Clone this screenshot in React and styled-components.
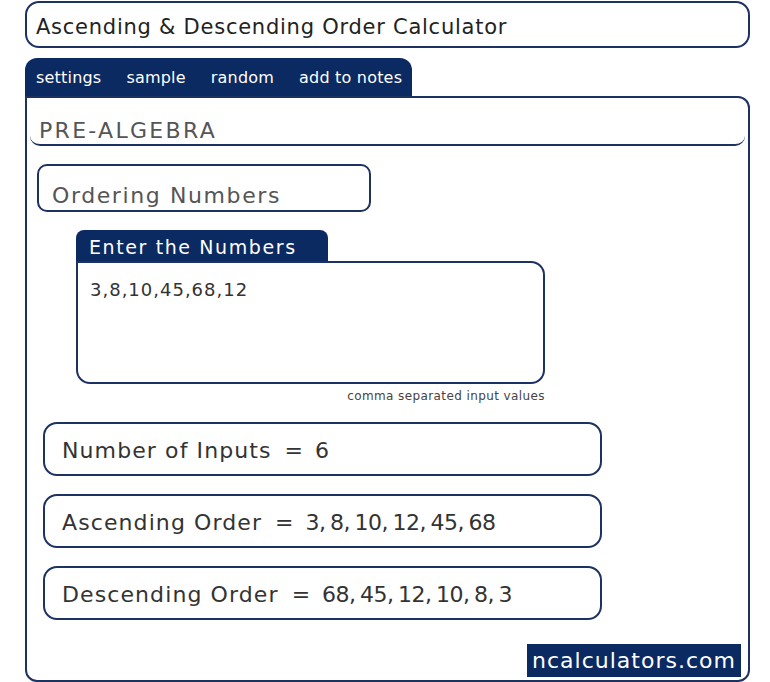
import React from "react";
import styled, { createGlobalStyle } from "styled-components";

const navy = "#0c2a62";
const line = "#1d3263";

const GlobalStyle = createGlobalStyle`
  html, body {
    margin: 0;
    padding: 0;
    background: #fff;
  }
  body {
    font-family: "DejaVu Sans", "Open Sans", sans-serif;
  }
`;

function Result({ label, value }) {
  return (
    <ResultStyled>
      <LabelStyled>{label}</LabelStyled>
      <EqStyled>=</EqStyled>
      <ValueStyled>{value}</ValueStyled>
    </ResultStyled>
  );
}

export default function App() {
  const values = [3, 8, 10, 45, 68, 12];
  const asc = [...values].sort((a, b) => a - b);
  const desc = [...asc].reverse();

  return (
    <>
      <GlobalStyle />
      <PageStyled>
        <TitleStyled>Ascending &amp; Descending Order Calculator</TitleStyled>
        <TabBarStyled>
          <TabStyled>settings</TabStyled>
          <TabStyled>sample</TabStyled>
          <TabStyled>random</TabStyled>
          <TabStyled>add to notes</TabStyled>
        </TabBarStyled>
        <PanelStyled>
          <SectionHeadStyled>PRE-ALGEBRA</SectionHeadStyled>
          <TopicStyled>Ordering Numbers</TopicStyled>
          <InputGroupStyled>
            <InputLabelStyled>Enter the Numbers</InputLabelStyled>
            <TextAreaStyled defaultValue={values.join(",")} />
            <HintStyled>comma separated input values</HintStyled>
          </InputGroupStyled>
          <ResultsStyled>
            <Result label="Number of Inputs" value={values.length} />
            <Result label="Ascending Order" value={asc.join(", ")} />
            <Result label="Descending Order" value={desc.join(", ")} />
          </ResultsStyled>
          <FooterStyled>
            <BrandStyled>ncalculators.com</BrandStyled>
          </FooterStyled>
        </PanelStyled>
      </PageStyled>
    </>
  );
}

const PageStyled = styled.div`
  width: 725px;
  padding: 1px 0 0 25px;
  box-sizing: content-box;
`;

const TitleStyled = styled.div`
  height: 39px;
  border: 2px solid ${line};
  border-radius: 14px;
  padding: 4px 9px 0;
  box-sizing: content-box;
  display: flex;
  align-items: center;
  font-size: 21px;
  color: #222;
  letter-spacing: 0.75px;
  white-space: nowrap;
`;

const TabBarStyled = styled.div`
  margin-top: 10px;
  width: 387px;
  height: 38px;
  background: ${navy};
  border-radius: 12px 12px 0 0;
  display: flex;
  align-items: center;
  padding-left: 11px;
  box-sizing: border-box;
`;

const TabStyled = styled.span`
  color: #fff;
  font-size: 16px;
  margin-right: 25px;
  letter-spacing: 0.2px;
  white-space: nowrap;
`;

const PanelStyled = styled.div`
  border: 2px solid ${line};
  border-radius: 0 12px 12px 12px;
  height: 586px;
  box-sizing: border-box;
  display: flex;
  flex-direction: column;
`;

const SectionHeadStyled = styled.div`
  margin: 0 3px;
  height: 48px;
  box-sizing: border-box;
  border-bottom: 2px solid ${line};
  border-radius: 0 0 10px 10px;
  padding: 18px 0 0 9px;
  display: flex;
  align-items: center;
  font-size: 22px;
  letter-spacing: 2.3px;
  color: #555;
`;

const TopicStyled = styled.div`
  margin: 18px 0 0 10px;
  width: 334px;
  height: 48px;
  box-sizing: border-box;
  border: 2px solid ${line};
  border-radius: 10px;
  padding: 14px 0 0 13px;
  display: flex;
  align-items: center;
  font-size: 22px;
  letter-spacing: 1.6px;
  color: #555;
  white-space: nowrap;
`;

const InputGroupStyled = styled.div`
  margin: 18px 0 0 49px;
  width: 469px;
  display: flex;
  flex-direction: column;
`;

const InputLabelStyled = styled.div`
  width: 252px;
  height: 31px;
  box-sizing: border-box;
  background: ${navy};
  border-radius: 8px 8px 0 0;
  color: #fff;
  font-size: 19px;
  letter-spacing: 1.6px;
  padding: 2px 0 0 13px;
  display: flex;
  align-items: center;
  white-space: nowrap;
`;

const TextAreaStyled = styled.textarea`
  height: 123px;
  box-sizing: border-box;
  border: 2px solid ${line};
  border-radius: 0 14px 14px 14px;
  padding: 16px 12px;
  resize: none;
  font-family: "DejaVu Sans", "Open Sans", sans-serif;
  font-size: 18px;
  color: #333;
  letter-spacing: 1px;
  outline: none;
`;

const HintStyled = styled.div`
  align-self: flex-end;
  margin-top: 5px;
  font-size: 12px;
  letter-spacing: 0.4px;
  color: #444;
  white-space: nowrap;
`;

const ResultsStyled = styled.div`
  margin: 19px 0 0 16px;
  display: flex;
  flex-direction: column;
  gap: 18px;
`;

const ResultStyled = styled.div`
  width: 559px;
  height: 54px;
  box-sizing: border-box;
  border: 2px solid ${line};
  border-radius: 14px;
  padding: 2px 0 0 17px;
  display: flex;
  align-items: center;
  font-size: 22px;
  color: #333;
  white-space: nowrap;
`;

const LabelStyled = styled.span`
  letter-spacing: 1.1px;
`;

const EqStyled = styled.span`
  margin: 0 12px 0 13px;
`;

const ValueStyled = styled.span`
  letter-spacing: -0.5px;
  word-spacing: -2px;
`;

const FooterStyled = styled.div`
  margin-top: auto;
  margin-bottom: 3px;
  display: flex;
  justify-content: flex-end;
  padding-right: 7px;
`;

const BrandStyled = styled.div`
  background: ${navy};
  color: #fff;
  font-size: 22px;
  width: 214px;
  height: 33px;
  display: flex;
  align-items: center;
  justify-content: center;
  letter-spacing: 1px;
  white-space: nowrap;
`;
